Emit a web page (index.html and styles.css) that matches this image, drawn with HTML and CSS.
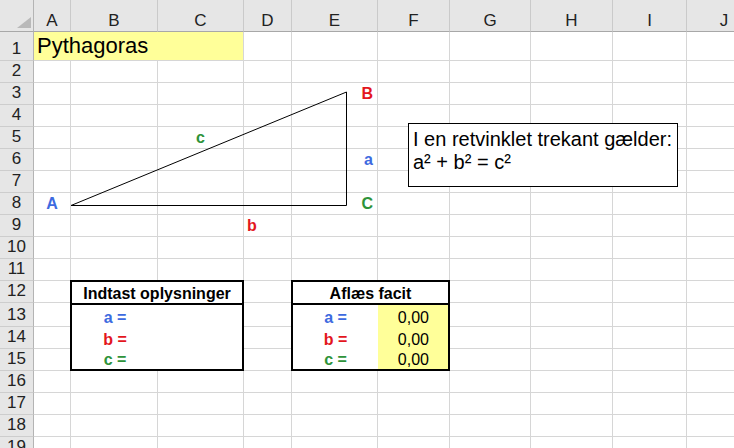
FILE: index.html
```html
<!DOCTYPE html>
<html lang="da">
<head>
<meta charset="utf-8">
<title>Pythagoras</title>
<link rel="stylesheet" href="styles.css">
</head>
<body>
<div class="sheet">
  <div class="corner"><svg width="14" height="11" viewBox="0 0 14 11"><polygon points="14,0 14,11 0,11" fill="#b9b9b9"/></svg></div>
  <div class="ch">A</div><div class="ch">B</div><div class="ch">C</div><div class="ch">D</div><div class="ch">E</div><div class="ch">F</div><div class="ch">G</div><div class="ch">H</div><div class="ch">I</div><div class="ch">J</div>

  <div class="rh">1</div>
  <div class="title">Pythagoras</div>
  <div class="c"></div><div class="c"></div><div class="c"></div><div class="c"></div><div class="c"></div><div class="c"></div><div class="c"></div>

  <div class="rh">2</div>
  <div class="c"></div><div class="c"></div><div class="c"></div><div class="c"></div><div class="c"></div><div class="c"></div><div class="c"></div><div class="c"></div><div class="c"></div><div class="c"></div>

  <div class="rh">3</div>
  <div class="c"></div><div class="c"></div><div class="c"></div><div class="c"></div><div class="c right b red">B</div><div class="c"></div><div class="c"></div><div class="c"></div><div class="c"></div><div class="c"></div>

  <div class="rh">4</div>
  <div class="c"></div><div class="c"></div><div class="c"></div><div class="c"></div><div class="c"></div><div class="c"></div><div class="c"></div><div class="c"></div><div class="c"></div><div class="c"></div>

  <div class="rh">5</div>
  <div class="c"></div><div class="c"></div><div class="c center b green">c</div><div class="c"></div><div class="c"></div><div class="c"></div><div class="c"></div><div class="c"></div><div class="c"></div><div class="c"></div>

  <div class="rh">6</div>
  <div class="c"></div><div class="c"></div><div class="c"></div><div class="c"></div><div class="c right b blue">a</div><div class="c"></div><div class="c"></div><div class="c"></div><div class="c"></div><div class="c"></div>

  <div class="rh">7</div>
  <div class="c"></div><div class="c"></div><div class="c"></div><div class="c"></div><div class="c"></div><div class="c"></div><div class="c"></div><div class="c"></div><div class="c"></div><div class="c"></div>

  <div class="rh">8</div>
  <div class="c center b blue">A</div><div class="c"></div><div class="c"></div><div class="c"></div><div class="c right b green">C</div><div class="c"></div><div class="c"></div><div class="c"></div><div class="c"></div><div class="c"></div>

  <div class="rh">9</div>
  <div class="c"></div><div class="c"></div><div class="c"></div><div class="c b red">b</div><div class="c"></div><div class="c"></div><div class="c"></div><div class="c"></div><div class="c"></div><div class="c"></div>

  <div class="rh">10</div>
  <div class="c"></div><div class="c"></div><div class="c"></div><div class="c"></div><div class="c"></div><div class="c"></div><div class="c"></div><div class="c"></div><div class="c"></div><div class="c"></div>

  <div class="rh">11</div>
  <div class="c"></div><div class="c"></div><div class="c"></div><div class="c"></div><div class="c"></div><div class="c"></div><div class="c"></div><div class="c"></div><div class="c"></div><div class="c"></div>

  <div class="panel panel-in">
    <div class="panel-head">Indtast oplysninger</div>
    <div class="lbl blue">a =</div><div class="val"></div>
    <div class="lbl red">b =</div><div class="val"></div>
    <div class="lbl green">c =</div><div class="val"></div>
  </div>
  <div class="panel panel-out">
    <div class="panel-head">Aflæs facit</div>
    <div class="lbl blue">a =</div><div class="val fill">0,00</div>
    <div class="lbl red">b =</div><div class="val fill">0,00</div>
    <div class="lbl green">c =</div><div class="val fill">0,00</div>
  </div>

  <div class="rh">12</div>
  <div class="c"></div><div class="c"></div><div class="c"></div><div class="c"></div><div class="c"></div><div class="c"></div>

  <div class="rh">13</div>
  <div class="c"></div><div class="c"></div><div class="c"></div><div class="c"></div><div class="c"></div><div class="c"></div>

  <div class="rh">14</div>
  <div class="c"></div><div class="c"></div><div class="c"></div><div class="c"></div><div class="c"></div><div class="c"></div>

  <div class="rh">15</div>
  <div class="c"></div><div class="c"></div><div class="c"></div><div class="c"></div><div class="c"></div><div class="c"></div>

  <div class="rh">16</div>
  <div class="c"></div><div class="c"></div><div class="c"></div><div class="c"></div><div class="c"></div><div class="c"></div><div class="c"></div><div class="c"></div><div class="c"></div><div class="c"></div>

  <div class="rh">17</div>
  <div class="c"></div><div class="c"></div><div class="c"></div><div class="c"></div><div class="c"></div><div class="c"></div><div class="c"></div><div class="c"></div><div class="c"></div><div class="c"></div>

  <div class="rh">18</div>
  <div class="c"></div><div class="c"></div><div class="c"></div><div class="c"></div><div class="c"></div><div class="c"></div><div class="c"></div><div class="c"></div><div class="c"></div><div class="c"></div>

  <div class="rh">19</div>
  <div class="c"></div><div class="c"></div><div class="c"></div><div class="c"></div><div class="c"></div><div class="c"></div><div class="c"></div><div class="c"></div><div class="c"></div><div class="c"></div>

  <svg class="triangle" width="734" height="448" viewBox="0 0 734 448">
    <polyline points="71,205.5 346.5,92 346.5,205.5 71,205.5" fill="none" stroke="#000" stroke-width="1"/>
  </svg>

  <div class="textbox">I en retvinklet trekant gælder:<br>a² + b² = c²</div>
</div>
</body>
</html>
```

FILE: styles.css
```css
html, body {
  margin: 0;
  padding: 0;
  overflow: hidden;
  background: #fff;
}

body {
  width: 734px;
  height: 448px;
  font-family: "Liberation Sans", Arial, sans-serif;
  color: #000;
}

.sheet {
  position: relative;
  display: grid;
  grid-template-columns: 34px 37px 87px 86px 48px 86px 72px 81px 82px 74px 75px;
  grid-template-rows: 32px 29px repeat(11, 22px) 24px repeat(6, 22px);
  font-size: 16px;
}

.sheet > div {
  box-sizing: border-box;
}

.corner {
  background: #e6e6e6;
  border-right: 1px solid #b4b4b4;
  border-bottom: 1px solid #a8a8a8;
  display: flex;
  justify-content: flex-end;
  align-items: flex-end;
  padding: 0 2px 3px 0;
}

.corner svg {
  display: block;
}

.ch {
  background: #e6e6e6;
  border-right: 1px solid #cacaca;
  border-bottom: 1px solid #a8a8a8;
  display: flex;
  justify-content: center;
  align-items: flex-end;
  font-size: 17px;
  color: #222;
  white-space: nowrap;
  overflow: hidden;
}

.rh {
  background: #e6e6e6;
  border-right: 1px solid #b4b4b4;
  border-bottom: 1px solid #cdcdcd;
  display: flex;
  justify-content: center;
  align-items: flex-end;
  padding-bottom: 1px;
  font-size: 17px;
  color: #222;
}

.c {
  border-right: 1px solid #d6d6d6;
  border-bottom: 1px solid #d6d6d6;
  display: flex;
  align-items: flex-end;
  padding: 0 4px 1px 3px;
  white-space: nowrap;
}

.c.center {
  justify-content: center;
  padding-left: 0;
  padding-right: 0;
}

.c.right {
  justify-content: flex-end;
}

.b {
  font-weight: bold;
}

.blue { color: #3d6ae0; }
.red { color: #e3161d; }
.green { color: #2e933a; }

.title {
  grid-column: 2 / 5;
  grid-row: 2;
  background: #ffff99;
  border-right: 1px solid #d6d6d6;
  border-bottom: 1px solid #d6d6d6;
  display: flex;
  align-items: flex-end;
  padding: 0 0 1px 3px;
  font-size: 22px;
  white-space: nowrap;
}

.panel {
  grid-row: 13 / 17;
  margin: -1px 0 0 -1px;
  border: 2px solid #000;
  background: #fff;
  display: grid;
  grid-template-rows: 23px 22px 22px 1fr;
  position: relative;
  z-index: 1;
}

.panel-in {
  grid-column: 3 / 5;
  grid-template-columns: 86px 1fr;
}

.panel-out {
  grid-column: 6 / 8;
  grid-template-columns: 85px 1fr;
}

.panel-head {
  grid-column: 1 / -1;
  border-bottom: 2px solid #000;
  display: flex;
  justify-content: center;
  align-items: flex-end;
  font-weight: bold;
  box-sizing: border-box;
}

.lbl {
  display: flex;
  justify-content: center;
  align-items: flex-end;
  font-weight: bold;
}

.val {
  display: flex;
  justify-content: flex-end;
  align-items: flex-end;
  padding: 0 19px 0 0;
}

.val.fill {
  background: #ffff99;
}

.triangle {
  position: absolute;
  left: 0;
  top: 0;
  pointer-events: none;
  z-index: 2;
}

.textbox {
  position: absolute;
  left: 408px;
  top: 123px;
  width: 270px;
  height: 64px;
  box-sizing: border-box;
  border: 1px solid #000;
  background: #fff;
  padding: 4px 4px 0 4px;
  font-size: 20px;
  white-space: nowrap;
  z-index: 3;
}
```
